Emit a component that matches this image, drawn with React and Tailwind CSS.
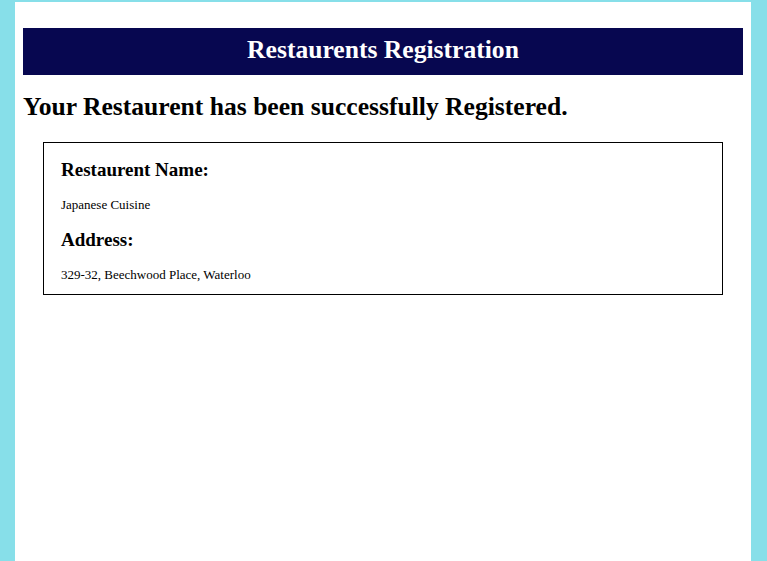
import React from "react";

const App = () => {
  const restaurant = {
    name: "Japanese Cuisine",
    address: "329-32, Beechwood Place, Waterloo",
  };

  return (
    <div
      className="min-h-screen bg-[#87dfe9] pt-[2px]"
      style={{ fontFamily: '"Liberation Serif", "Times New Roman", serif' }}
    >
      <div className="ml-[15px] w-[736px] min-h-[559px] bg-white px-2 pt-[26px] text-black">
        <h1 className="flex h-[47px] items-center justify-center bg-[#070750] pb-[2px] text-[25.6px] font-bold text-white">
          Restaurents Registration
        </h1>
        <h2 className="mt-[18px] text-[25.6px] font-bold leading-[28px]">
          Your Restaurent has been successfully Registered.
        </h2>
        <div className="mx-5 mt-[21px] border border-black px-[17px] pt-[16px] pb-[12px]">
          <h3 className="text-[19px] font-bold leading-[22px]">Restaurent Name:</h3>
          <p className="mt-[16px] text-[13px] leading-[15px]">{restaurant.name}</p>
          <h3 className="mt-[17px] text-[19px] font-bold leading-[22px]">Address:</h3>
          <p className="mt-[16px] text-[13px] leading-[15px]">{restaurant.address}</p>
        </div>
      </div>
    </div>
  );
};

export default App;
